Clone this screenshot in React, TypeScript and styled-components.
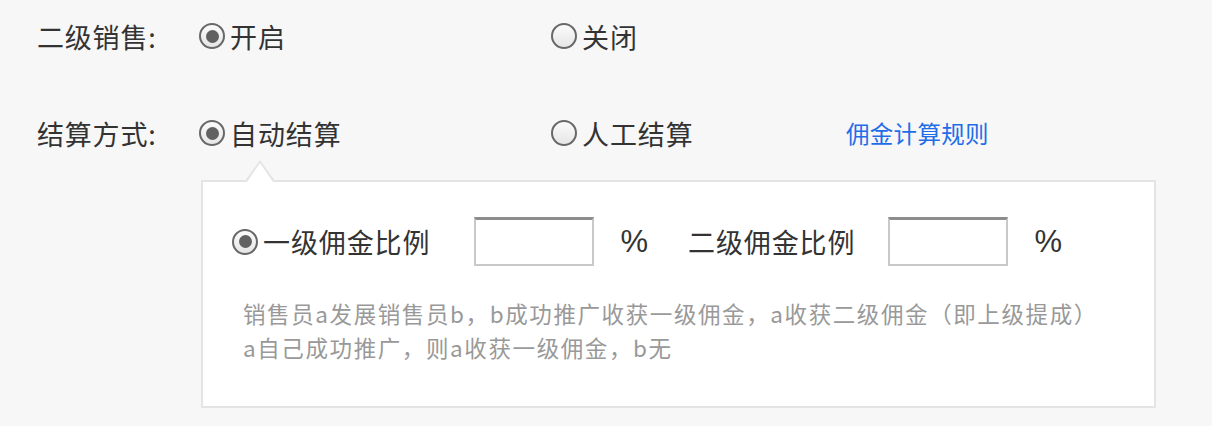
import styled, { createGlobalStyle } from "styled-components";

const FONT = `"Noto Sans CJK SC", "Liberation Sans", sans-serif`;

function App() {
  return (
    <>
      <GlobalStyle />
      <Form>
        <Row>
          <Label>二级销售:</Label>
          <Option $width={352}>
            <Radio $checked />
            开启
          </Option>
          <Option>
            <Radio />
            关闭
          </Option>
        </Row>
        <Row $gap={53}>
          <Label>结算方式:</Label>
          <Option $width={352}>
            <Radio $checked />
            自动结算
          </Option>
          <Option $width={295}>
            <Radio />
            人工结算
          </Option>
          <RuleLink href="#">佣金计算规则</RuleLink>
        </Row>
        <Panel>
          <RateRow>
            <Option>
              <Radio $checked />
              一级佣金比例
            </Option>
            <RateInput $left={44} />
            <Percent>%</Percent>
            <RateLabel>二级佣金比例</RateLabel>
            <RateInput $left={33} />
            <Percent>%</Percent>
          </RateRow>
          <Desc>
            <p>销售员a发展销售员b，b成功推广收获一级佣金，a收获二级佣金（即上级提成）</p>
            <p>a自己成功推广，则a收获一级佣金，b无</p>
          </Desc>
        </Panel>
      </Form>
    </>
  );
}

const GlobalStyle = createGlobalStyle`
  body {
    margin: 0;
    background: #f7f7f7;
    font-family: ${FONT};
    color: #333;
  }
`;

const Form = styled.div`
  padding: 14px 0 0 37px;
`;

const Row = styled.div<{ $gap?: number }>`
  display: flex;
  align-items: center;
  height: 44px;
  margin-top: ${(p) => p.$gap ?? 0}px;
`;

const Label = styled.div`
  width: 162px;
  font-size: 27px;
  letter-spacing: 0.8px;
  white-space: nowrap;
`;

const Option = styled.label<{ $width?: number }>`
  display: flex;
  align-items: center;
  gap: 5px;
  width: ${(p) => (p.$width ? `${p.$width}px` : "auto")};
  font-size: 27px;
  letter-spacing: 0.9px;
  white-space: nowrap;
`;

const Radio = styled.span<{ $checked?: boolean }>`
  position: relative;
  flex: none;
  width: 26px;
  height: 26px;
  box-sizing: border-box;
  border: 2px solid #686868;
  border-radius: 50%;
  background: linear-gradient(#fbfbfb, #e6e6e6);
  &::after {
    content: "";
    display: ${(p) => (p.$checked ? "block" : "none")};
    position: absolute;
    left: 4.5px;
    top: 4.5px;
    width: 13px;
    height: 13px;
    border-radius: 50%;
    background: #616161;
  }
`;

const RuleLink = styled.a`
  font-size: 23.5px;
  letter-spacing: 0.3px;
  color: #1f6ee8;
  text-decoration: none;
  white-space: nowrap;
`;

const Panel = styled.div`
  position: relative;
  box-sizing: border-box;
  width: 955px;
  margin: 25px 0 0 164px;
  padding: 35px 0 42px 29px;
  background: #fff;
  border: 2px solid #e4e4e4;
  &::before,
  &::after {
    content: "";
    position: absolute;
    width: 0;
    height: 0;
    border-style: solid;
    border-color: transparent;
  }
  &::before {
    left: 42px;
    top: -22px;
    border-width: 0 15px 21px 15px;
    border-bottom-color: #e4e4e4;
  }
  &::after {
    left: 44px;
    top: -19px;
    border-width: 0 13px 19px 13px;
    border-bottom-color: #fff;
  }
`;

const RateRow = styled.div`
  display: flex;
  align-items: center;
  height: 49px;
`;

const RateInput = styled.input<{ $left: number }>`
  box-sizing: border-box;
  width: 120px;
  height: 49px;
  margin-left: ${(p) => p.$left}px;
  border: 2px solid #c9c9c9;
  border-top: 3px solid #8c8c8c;
  background: #fff;
  outline: none;
`;

const Percent = styled.span`
  margin: 0 40px 0 26px;
  font-size: 31px;
  font-family: "Liberation Sans", sans-serif;
`;

const RateLabel = styled.span`
  font-size: 27px;
  letter-spacing: 0.9px;
  white-space: nowrap;
`;

const Desc = styled.div`
  margin-top: 30px;
  padding-left: 11px;
  color: #999;
  font-size: 22.5px;
  letter-spacing: 1.6px;
  line-height: 34px;
  p {
    margin: 0;
    white-space: nowrap;
  }
`;

export default App;
